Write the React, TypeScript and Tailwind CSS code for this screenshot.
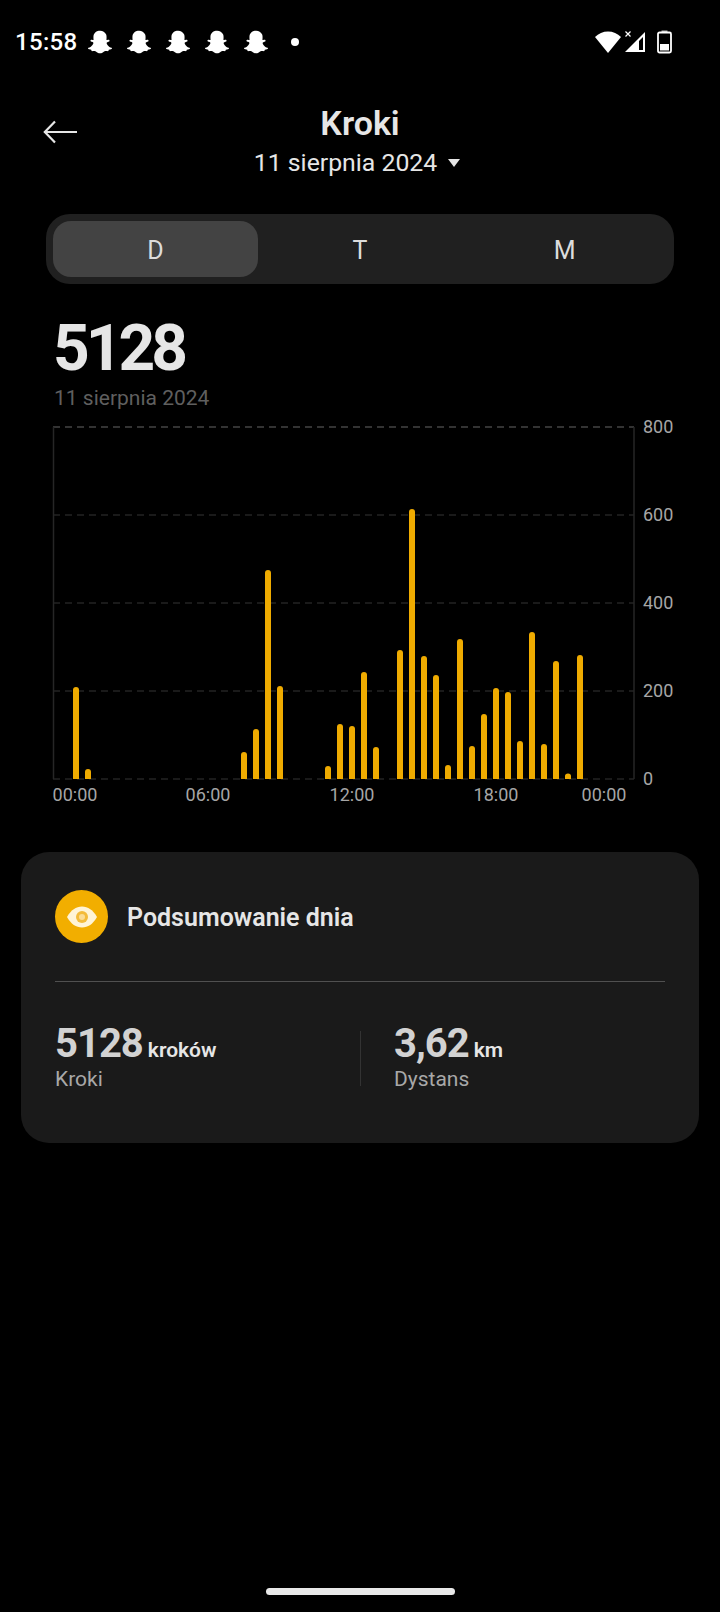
import React from 'react';
import { FaSnapchatGhost } from 'react-icons/fa';

const bars: [number, number][] = [
  [0, 91], [1, 9], [14, 26], [15, 49], [16, 208], [17, 92], [21, 12], [22, 54], [23, 52], [24, 106],
  [25, 31], [27, 128], [28, 269], [29, 122], [30, 103], [31, 13], [32, 139], [33, 32], [34, 64],
  [35, 90], [36, 86], [37, 37], [38, 146], [39, 34], [40, 117], [41, 5], [42, 123],
];

const gridLines = [427, 515, 603, 691, 779];
const yLabels = ['800', '600', '400', '200', '0'];
const xLabels: [string, number][] = [['00:00', 75], ['06:00', 208], ['12:00', 352], ['18:00', 496], ['00:00', 604]];

const StepsChart = () => (
  <svg width="720" height="400" viewBox="0 412 720 400" className="block" style={{ fontFamily: 'Roboto, sans-serif' }}>
    {gridLines.map((y, i) => (
      <line key={y} x1="53" x2="634" y1={y} y2={y} stroke={i === 0 ? '#444444' : '#232323'} strokeWidth="1.5" strokeDasharray="7 5" />
    ))}
    <line x1="53.5" x2="53.5" y1="427" y2="779" stroke="#262626" strokeWidth="1.5" />
    <line x1="634" x2="634" y1="427" y2="779" stroke="#262626" strokeWidth="1.5" />
    {bars.map(([i, h]) => (
      <path
        key={i}
        d={`M${73 + i * 12} 779v${-(h - 2)}a3 ${Math.min(3, h / 2)} 0 0 1 6 0v${h - 2}z`}
        fill="#efab00"
      />
    ))}
    {yLabels.map((label, i) => (
      <text key={label} x="643" y={gridLines[i] + 6} fontSize="18" fill="#a6a6a6">{label}</text>
    ))}
    {xLabels.map(([label, x], i) => (
      <text key={i} x={x} y="801" fontSize="18" fill="#a6a6a6" textAnchor="middle">{label}</text>
    ))}
  </svg>
);

const StatusBar = () => (
  <div className="flex h-[84px] items-center pl-[15px] pr-[48px] text-white">
    <span className="w-[73px] text-[24px] font-medium leading-none tracking-[0.3px]">15:58</span>
    <div className="flex items-center gap-[15px]">
      {[0, 1, 2, 3, 4].map((i) => (
        <FaSnapchatGhost key={i} className="h-[24px] w-[24px]" />
      ))}
    </div>
    <div className="ml-[23px] h-[8px] w-[8px] rounded-full bg-white" />
    <div className="ml-auto flex items-center gap-[1px]">
      <svg width="28" height="24" viewBox="0 0 28 24">
        <path d="M14 23 1 7C4.500 3.500 9 1.500 14 1.500S23.500 3.500 27 7z" fill="#fff" />
      </svg>
      <svg width="24" height="24" viewBox="0 0 24 24" className="mr-[9px]">
        <path d="M2 22 22 2v20zM16 20V11l4-4V20z" fill="#fff" fillRule="evenodd" />
        <path d="M2.500 1.500l5 5M7.500 1.500l-5 5" stroke="#fff" strokeWidth="1.200" />
      </svg>
      <svg width="15" height="24" viewBox="0 0 15 24">
        <path d="M4.500 0.500h6v2h-6z" fill="#bbb" />
        <rect x="1" y="2.500" width="13" height="20" rx="1.500" fill="none" stroke="#fff" strokeWidth="1.800" />
        <rect x="3" y="14" width="9" height="6.500" fill="#fff" />
      </svg>
    </div>
  </div>
);

const Stat = ({ value, unit, label }: { value: string; unit: string; label: string }) => (
  <div>
    <div className="flex items-baseline gap-[5px] leading-[38px] text-[#d2d2d2]">
      <span className="text-[40px] font-bold tracking-[-1px]">{value}</span>
      <span className="text-[21px] font-semibold text-[#e6e6e6]">{unit}</span>
    </div>
    <div className="mt-[-4px] text-[21px] leading-[28px] text-[#a8a8a8]">{label}</div>
  </div>
);

const App = () => {
  return (
    <div className="flex min-h-[1612px] w-[720px] flex-col bg-black" style={{ fontFamily: 'Roboto, sans-serif' }}>
      <StatusBar />

      {/* Header */}
      <div className="relative flex flex-col items-center text-[#e6e6e6]">
        <svg width="34" height="24" viewBox="0 0 34 24" className="absolute left-[43px] top-[36px]" fill="none" stroke="#e6e6e6" strokeWidth="2.200">
          <path d="M34 12H2M12 1.500 1.800 12 12 22.500" />
        </svg>
        <h1 className="mt-[19px] text-[34px] font-semibold leading-[40px]">Kroki</h1>
        <div className="mr-[6px] mt-[4px] flex items-center gap-[11px] text-[24.800px] leading-[32px]">
          <span>11 sierpnia 2024</span>
          <span className="h-0 w-0 border-x-[6px] border-t-[8px] border-x-transparent border-t-[#e6e6e6]" />
        </div>
      </div>

      {/* Day / week / month tabs */}
      <div className="mx-[46px] mt-[35px] grid h-[70px] grid-cols-3 rounded-[24px] bg-[#202020] p-[7px] text-[25px] text-[#dcdcdc]">
        <div className="flex items-center justify-center rounded-[18px] bg-[#434343] pt-[4px]">D</div>
        <div className="flex items-center justify-center pt-[4px]">T</div>
        <div className="flex items-center justify-center pt-[4px]">M</div>
      </div>

      <div className="ml-[53px] mt-[30px] text-[64px] font-bold leading-[70px] tracking-[-4px] text-[#e6e6e6]">5128</div>
      <div className="ml-[54px] mt-[1px] text-[21px] leading-[26px] text-[#5f5f5f]">11 sierpnia 2024</div>

      <div className="mt-[1px]">
        <StepsChart />
      </div>

      {/* Summary card */}
      <div className="mx-[21px] mt-[40px] h-[291px] rounded-[28px] bg-[#1a1a1a] px-[34px] pt-[38px]">
        <div className="flex items-center gap-[19px]">
          <div className="flex h-[53px] w-[53px] items-center justify-center rounded-full bg-[#f2ae00]">
            <svg width="30" height="22" viewBox="0 0 30 22">
              <path d="M0 11C4 4 9 .5 15 .5S26 4 30 11C26 18 21 21.500 15 21.500S4 18 0 11z" fill="#fff4d6" />
              <circle cx="15" cy="11" r="6" fill="#f3bb3a" />
              <circle cx="15" cy="11" r="3" fill="#fbdc94" />
            </svg>
          </div>
          <span className="pt-[2px] text-[25px] font-semibold text-[#e6e6e6]">Podsumowanie dnia</span>
        </div>
        <div className="mt-[38px] h-px bg-[#505050]" />
        <div className="mt-[43px] flex">
          <div className="w-[305px]">
            <Stat value="5128" unit="kroków" label="Kroki" />
          </div>
          <div className="mt-[6px] h-[55px] w-px bg-[#333333]" />
          <div className="pl-[33px]">
            <Stat value="3,62" unit="km" label="Dystans" />
          </div>
        </div>
      </div>

      <div className="mx-auto mb-[17px] mt-auto h-[7px] w-[189px] rounded-full bg-[#e8e8e8]" />
    </div>
  );
};

export default App;
